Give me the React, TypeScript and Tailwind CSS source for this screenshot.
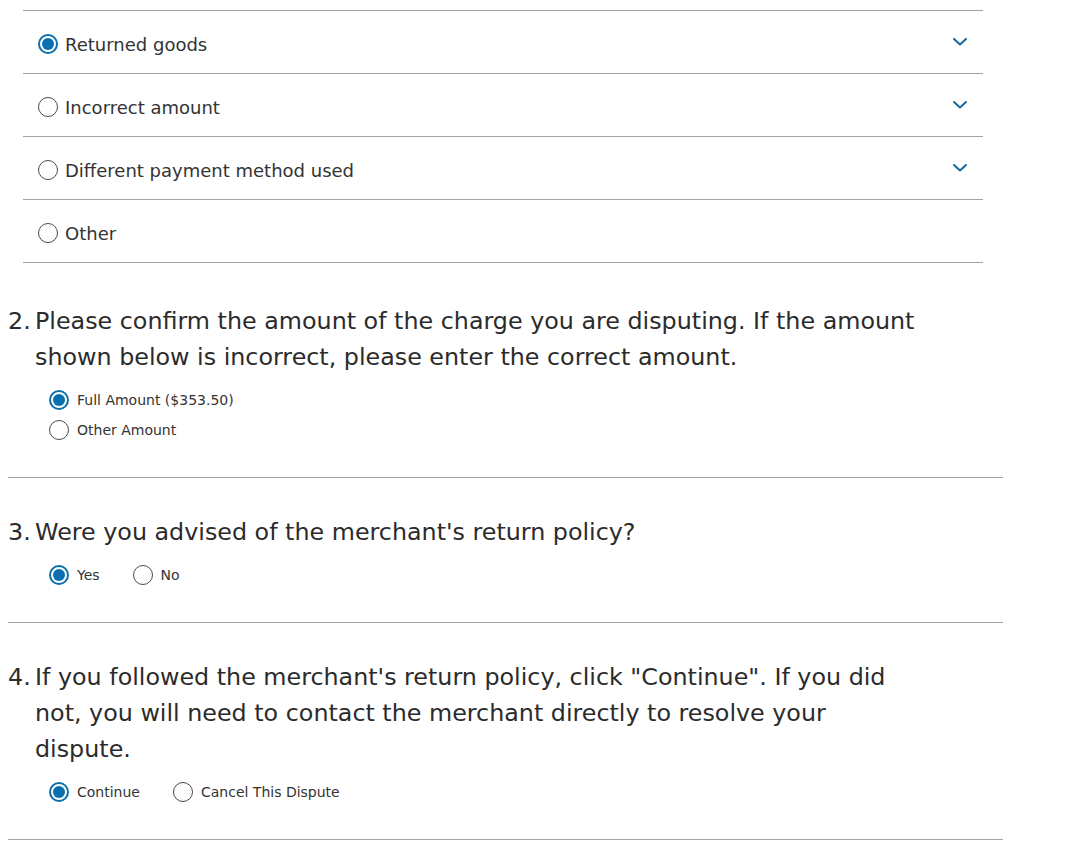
import React, { useState } from 'react';

const REASONS = [
  { id: 'returned', label: 'Returned goods', expandable: true },
  { id: 'incorrect', label: 'Incorrect amount', expandable: true },
  { id: 'payment', label: 'Different payment method used', expandable: true },
  { id: 'other', label: 'Other', expandable: false },
];

function Radio({ checked }: { checked: boolean }) {
  return (
    <span
      className={`flex h-5 w-5 shrink-0 items-center justify-center rounded-full bg-white ${
        checked ? 'border-2 border-[#0a6fb0]' : 'border border-[#4a4a4a]'
      }`}
    >
      {checked && <span className="h-3 w-3 rounded-full bg-[#0a6fb0]" />}
    </span>
  );
}

function Chevron() {
  return (
    <svg width="14" height="8" viewBox="0 0 14 8" fill="none">
      <path d="M1 1l6 5.5L13 1" stroke="#1565a0" strokeWidth="2" strokeLinecap="round" strokeLinejoin="round" />
    </svg>
  );
}

function Option({ label, checked, onClick }: { label: string; checked: boolean; onClick: () => void }) {
  return (
    <button onClick={onClick} className="flex items-center gap-2 text-left text-[14px] text-[#333] h-[30px]">
      <Radio checked={checked} />
      <span>{label}</span>
    </button>
  );
}

function Question({ num, children }: { num: number; children: React.ReactNode }) {
  return (
    <div className="flex text-[23.8px] leading-[36px] text-[#2b2b2b] mb-2.5">
      <span className="w-[27px] shrink-0">{num}.</span>
      <span className="max-w-[886px]">{children}</span>
    </div>
  );
}

export default function App() {
  const [reason, setReason] = useState('returned');
  const [amount, setAmount] = useState('full');
  const [advised, setAdvised] = useState('yes');
  const [next, setNext] = useState('continue');

  return (
    <div className="bg-white min-h-screen pt-[10px] pb-6" style={{ fontFamily: '"DejaVu Sans", sans-serif' }}>
      <div className="ml-[23px] w-[960px] border-t border-[#a3a3a3]">
        {REASONS.map((r) => (
          <div
            key={r.id}
            onClick={() => setReason(r.id)}
            className="flex h-[63px] items-center justify-between border-b border-[#a3a3a3] pt-[4px] pl-[15px] pr-[16px] cursor-pointer"
          >
            <div className="flex items-center gap-[7px] text-[18px] text-[#333]">
              <Radio checked={reason === r.id} />
              <span>{r.label}</span>
            </div>
            {r.expandable && (
              <span className="-mt-[4px]">
                <Chevron />
              </span>
            )}
          </div>
        ))}
      </div>

      <div className="ml-[8px] w-[995px]">
        <section className="pt-[40px] pb-[32px] border-b border-[#a3a3a3]">
          <Question num={2}>
            Please confirm the amount of the charge you are disputing. If the amount shown below is incorrect, please enter the correct amount.
          </Question>
          <div className="flex flex-col pl-[41px]">
            <Option label="Full Amount ($353.50)" checked={amount === 'full'} onClick={() => setAmount('full')} />
            <Option label="Other Amount" checked={amount === 'other'} onClick={() => setAmount('other')} />
          </div>
        </section>

        <section className="pt-[36px] pb-[32px] border-b border-[#a3a3a3]">
          <Question num={3}>Were you advised of the merchant's return policy?</Question>
          <div className="flex gap-[33px] pl-[41px]">
            <Option label="Yes" checked={advised === 'yes'} onClick={() => setAdvised('yes')} />
            <Option label="No" checked={advised === 'no'} onClick={() => setAdvised('no')} />
          </div>
        </section>

        <section className="pt-[36px] pb-[32px] border-b border-[#a3a3a3]">
          <Question num={4}>
            If you followed the merchant's return policy, click "Continue". If you did not, you will need to contact the merchant directly to resolve your dispute.
          </Question>
          <div className="flex gap-[33px] pl-[41px]">
            <Option label="Continue" checked={next === 'continue'} onClick={() => setNext('continue')} />
            <Option label="Cancel This Dispute" checked={next === 'cancel'} onClick={() => setNext('cancel')} />
          </div>
        </section>
      </div>
    </div>
  );
}
